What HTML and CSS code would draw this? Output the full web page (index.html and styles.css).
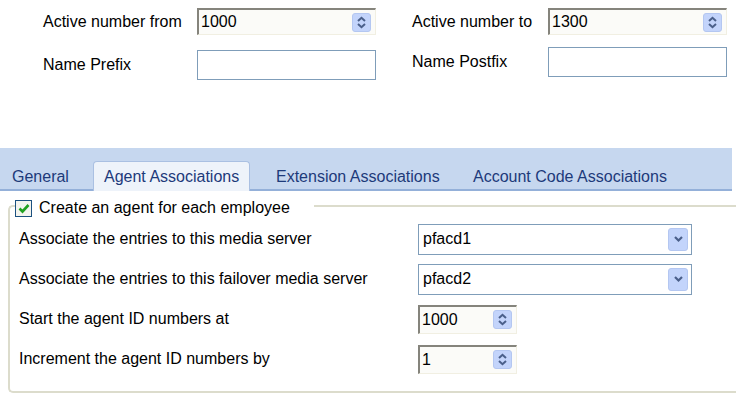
FILE: index.html
```html
<!DOCTYPE html>
<html>
<head>
	<meta charset="UTF-8">
	<title>Employee Import</title>
	<link rel="stylesheet" href="styles.css">
</head>
<body>
	<div class="top">
		<div class="col col-left">
			<div class="row">
				<label class="lbl">Active number from</label>
				<div class="spin sunken wide">
					<span class="val">1000</span>
					<span class="btn"><svg width="11" height="13" viewBox="0 0 11 13"><path d="M2 5 L5.5 1.8 L9 5" fill="none" stroke="#4a5f8a" stroke-width="2"/><path d="M2 8 L5.5 11.2 L9 8" fill="none" stroke="#4a5f8a" stroke-width="2"/></svg></span>
				</div>
			</div>
			<div class="row row2">
				<label class="lbl">Name Prefix</label>
				<div class="text wide"></div>
			</div>
		</div>
		<div class="col col-right">
			<div class="row">
				<label class="lbl">Active number to</label>
				<div class="spin sunken wide">
					<span class="val">1300</span>
					<span class="btn"><svg width="11" height="13" viewBox="0 0 11 13"><path d="M2 5 L5.5 1.8 L9 5" fill="none" stroke="#4a5f8a" stroke-width="2"/><path d="M2 8 L5.5 11.2 L9 8" fill="none" stroke="#4a5f8a" stroke-width="2"/></svg></span>
				</div>
			</div>
			<div class="row row2">
				<label class="lbl">Name Postfix</label>
				<div class="text wide"></div>
			</div>
		</div>
	</div>

	<div class="tabs">
		<div class="tab tab-general">General</div>
		<div class="tab active">Agent Associations</div>
		<div class="tab tab-ext">Extension Associations</div>
		<div class="tab">Account Code Associations</div>
	</div>

	<div class="panel">
		<div class="group">
			<div class="legend">
				<span class="check"><svg width="12" height="11" viewBox="0 0 12 11"><path d="M1.5 5.5 L4.5 8.5 L10.5 2" fill="none" stroke="#21a121" stroke-width="2.6"/></svg></span>
				<span>Create an agent for each employee</span>
			</div>
			<div class="field">
				<span class="flabel">Associate the entries to this media server</span>
				<div class="combo">
					<span class="val">pfacd1</span>
					<span class="dbtn"><svg width="11" height="8" viewBox="0 0 11 8"><path d="M2 2 L5.5 5.5 L9 2" fill="none" stroke="#4a5f8a" stroke-width="2.2"/></svg></span>
				</div>
			</div>
			<div class="field">
				<span class="flabel">Associate the entries to this failover media server</span>
				<div class="combo">
					<span class="val">pfacd2</span>
					<span class="dbtn"><svg width="11" height="8" viewBox="0 0 11 8"><path d="M2 2 L5.5 5.5 L9 2" fill="none" stroke="#4a5f8a" stroke-width="2.2"/></svg></span>
				</div>
			</div>
			<div class="field">
				<span class="flabel">Start the agent ID numbers at</span>
				<div class="spin sunken small">
					<span class="val">1000</span>
					<span class="btn"><svg width="11" height="13" viewBox="0 0 11 13"><path d="M2 5 L5.5 1.8 L9 5" fill="none" stroke="#4a5f8a" stroke-width="2"/><path d="M2 8 L5.5 11.2 L9 8" fill="none" stroke="#4a5f8a" stroke-width="2"/></svg></span>
				</div>
			</div>
			<div class="field">
				<span class="flabel">Increment the agent ID numbers by</span>
				<div class="spin sunken small">
					<span class="val">1</span>
					<span class="btn"><svg width="11" height="13" viewBox="0 0 11 13"><path d="M2 5 L5.5 1.8 L9 5" fill="none" stroke="#4a5f8a" stroke-width="2"/><path d="M2 8 L5.5 11.2 L9 8" fill="none" stroke="#4a5f8a" stroke-width="2"/></svg></span>
				</div>
			</div>
		</div>
	</div>
</body>
</html>
```

FILE: styles.css
```css
body {
	margin: 0;
	padding: 0;
	background-color: #ffffff;
	font-family: "Liberation Sans", Arial, sans-serif;
	font-size: 16px;
	color: #000000;
	overflow: hidden;
}

.top {
	display: flex;
	padding-top: 8px;
	height: 140px;
}

.col {
	display: flex;
	flex-direction: column;
}

.col-left {
	width: 376px;
	padding-left: 43px;
	box-sizing: border-box;
}

.col-left .lbl {
	width: 154px;
}

.col-left .row2 {
	margin-top: 15px;
}

.col-right {
	padding-left: 36px;
}

.col-right .lbl {
	width: 136px;
}

.col-right .row2 {
	margin-top: 12px;
}

.row {
	display: flex;
	align-items: center;
}

.lbl {
	flex: none;
}

.wide {
	width: 179px;
	height: 27px;
}

.text {
	border: 1px solid #7f9db9;
	box-sizing: border-box;
	height: 30px;
	background-color: #ffffff;
}

.spin {
	display: flex;
	align-items: center;
	justify-content: space-between;
	box-sizing: border-box;
	background-color: #fbfbf8;
}

.sunken {
	border-top: 2px solid #85847c;
	border-left: 2px solid #85847c;
	border-right: 1px solid #f1efe2;
	border-bottom: 1px solid #f1efe2;
}

.spin .val {
	padding-left: 2px;
}

.btn {
	width: 19px;
	height: 19px;
	margin-right: 4px;
	border-radius: 3px;
	background-color: #c3d4fb;
	border: 1px solid #b4c7f1;
	box-sizing: border-box;
	display: flex;
	align-items: center;
	justify-content: center;
}

.tabs {
	display: flex;
	align-items: flex-end;
	height: 43px;
	width: 732px;
	padding-left: 12px;
	background-color: #c6d7ef;
	border-bottom: 2px solid #94b0d9;
	box-sizing: border-box;
	color: #1d3a7a;
}

.tab {
	height: 28px;
	padding-top: 4px;
	line-height: 24px;
	box-sizing: border-box;
	white-space: nowrap;
}

.tab-general {
	width: 81px;
}

.tab.active {
	width: 157px;
	height: 30px;
	margin-bottom: -2px;
	padding: 3px 0 0 10px;
	background-color: #eef3fa;
	border: 1px solid #aac0e2;
	border-bottom: none;
	border-radius: 4px 4px 0 0;
}

.tab-ext {
	width: 197px;
	margin-left: 26px;
}

.panel {
	padding: 14px 0 0 8px;
}

.group {
	border: 2px solid #dcdccc;
	border-right: none;
	border-radius: 5px 0 0 5px;
	height: 188px;
	box-sizing: border-box;
	position: relative;
	padding: 12px 0 0 9px;
}

.legend {
	position: absolute;
	top: -8px;
	left: 5px;
	background-color: #ffffff;
	display: flex;
	align-items: center;
	gap: 7px;
	padding-right: 24px;
}

.check {
	width: 17px;
	height: 17px;
	border: 1px solid #1c5180;
	box-sizing: border-box;
	background-color: #f4f4ee;
	display: flex;
	align-items: center;
	justify-content: center;
}

.field {
	display: flex;
	align-items: center;
	height: 40px;
}

.flabel {
	width: 399px;
	flex: none;
}

.combo {
	display: flex;
	align-items: center;
	justify-content: space-between;
	width: 274px;
	height: 31px;
	border: 1px solid #7f9db9;
	box-sizing: border-box;
	background-color: #ffffff;
}

.combo .val {
	padding-left: 4px;
}

.dbtn {
	width: 20px;
	height: 23px;
	margin-right: 3px;
	border-radius: 3px;
	background-color: #c3d4fb;
	border: 1px solid #b4c7f1;
	box-sizing: border-box;
	display: flex;
	align-items: center;
	justify-content: center;
}

.small {
	width: 99px;
	height: 29px;
}
```
